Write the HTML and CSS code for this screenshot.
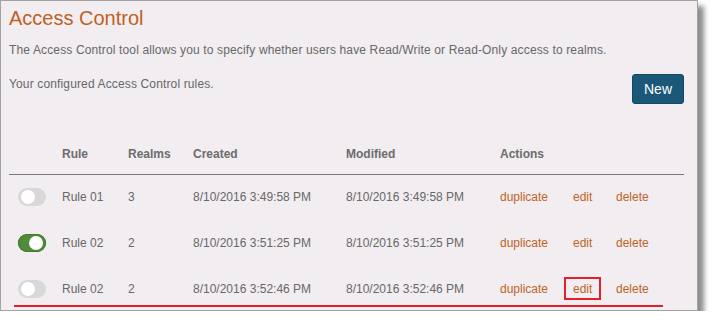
FILE: index.html
```html
<!DOCTYPE html>
<html lang="en">
<head>
    <meta charset="UTF-8">
    <title>Access Control</title>
    <link rel="stylesheet" href="styles.css">
</head>
<body>
    <div class="panel">
        <h1>Access Control</h1>
        <p class="intro">The Access Control tool allows you to specify whether users have Read/Write or Read-Only access to realms.</p>

        <div class="toolbar">
            <p>Your configured Access Control rules.</p>
            <button class="btn-new">New</button>
        </div>

        <div class="rules">
            <div class="row head">
                <span></span>
                <span>Rule</span>
                <span>Realms</span>
                <span>Created</span>
                <span>Modified</span>
                <span class="span-3">Actions</span>
            </div>
            <div class="row">
                <span><i class="toggle"></i></span>
                <span>Rule 01</span>
                <span>3</span>
                <span>8/10/2016 3:49:58 PM</span>
                <span>8/10/2016 3:49:58 PM</span>
                <a href="#">duplicate</a>
                <a href="#">edit</a>
                <a href="#">delete</a>
            </div>
            <div class="row">
                <span><i class="toggle on"></i></span>
                <span>Rule 02</span>
                <span>2</span>
                <span>8/10/2016 3:51:25 PM</span>
                <span>8/10/2016 3:51:25 PM</span>
                <a href="#">duplicate</a>
                <a href="#">edit</a>
                <a href="#">delete</a>
            </div>
            <div class="row">
                <span><i class="toggle"></i></span>
                <span>Rule 02</span>
                <span>2</span>
                <span>8/10/2016 3:52:46 PM</span>
                <span>8/10/2016 3:52:46 PM</span>
                <a href="#">duplicate</a>
                <a href="#" class="marked">edit</a>
                <a href="#">delete</a>
            </div>
        </div>

        <div class="mark-line"></div>
    </div>
</body>
</html>
```

FILE: styles.css
```css
* { margin: 0; padding: 0; box-sizing: border-box; }

body {
    font-family: 'Liberation Sans', Arial, sans-serif;
    background: #ffffff;
    color: #686868;
    font-size: 12px;
    line-height: 16px;
}

.panel {
    position: relative;
    width: 698px;
    height: 311px;
    padding: 5px 13px 0 8px;
    background: #f1edf1;
    border: 1px solid #a3a3a3;
    box-shadow: 6px 6px 5px rgba(0, 0, 0, 0.45);
    overflow: hidden;
}

h1 {
    color: #c0601f;
    font-size: 20px;
    font-weight: 400;
    line-height: 24px;
}

.intro {
    margin-top: 12px;
    letter-spacing: 0.14px;
}

.toolbar {
    display: flex;
    justify-content: space-between;
    align-items: flex-start;
    margin-top: 16px;
}

.toolbar p {
    margin-top: 2px;
    letter-spacing: 0.14px;
}

.btn-new {
    width: 52px;
    height: 30px;
    background: #1b5878;
    border: 1px solid #144763;
    border-radius: 3px;
    color: #ffffff;
    font-family: inherit;
    font-size: 14px;
    cursor: pointer;
}

.rules { margin-top: 42px; }

.row {
    display: grid;
    grid-template-columns: 53px 66px 65px 153px 154px 73px 43px 1fr;
    align-items: center;
    justify-items: start;
    height: 46px;
    padding-bottom: 3px;
}

.row.head {
    height: auto;
    padding-bottom: 12px;
    font-weight: 700;
    color: #6c6c6c;
    border-bottom: 1px solid #7a7a7a;
}

.span-3 { grid-column: span 3; }

.row a {
    color: #c0641f;
    text-decoration: none;
}

.toggle {
    position: relative;
    display: block;
    width: 28px;
    height: 18px;
    margin-left: 9px;
    border-radius: 9px;
    background: #d9d8d9;
}

.toggle::after {
    content: '';
    position: absolute;
    top: 2px;
    left: 3px;
    width: 14px;
    height: 14px;
    border-radius: 50%;
    background: #ffffff;
}

.toggle.on {
    background: #4f8b38;
    box-shadow: inset 0 0 0 1px #3f7a2c;
}

.toggle.on::after { left: 11px; }

/* annotation marks */
.marked { position: relative; }

.marked::after {
    content: '';
    position: absolute;
    inset: -4px -9px -3px -9px;
    border: 2px solid #e5202b;
}

.mark-line {
    position: absolute;
    left: 13px;
    top: 304px;
    width: 649px;
    height: 2px;
    background: #e5202b;
}
```
